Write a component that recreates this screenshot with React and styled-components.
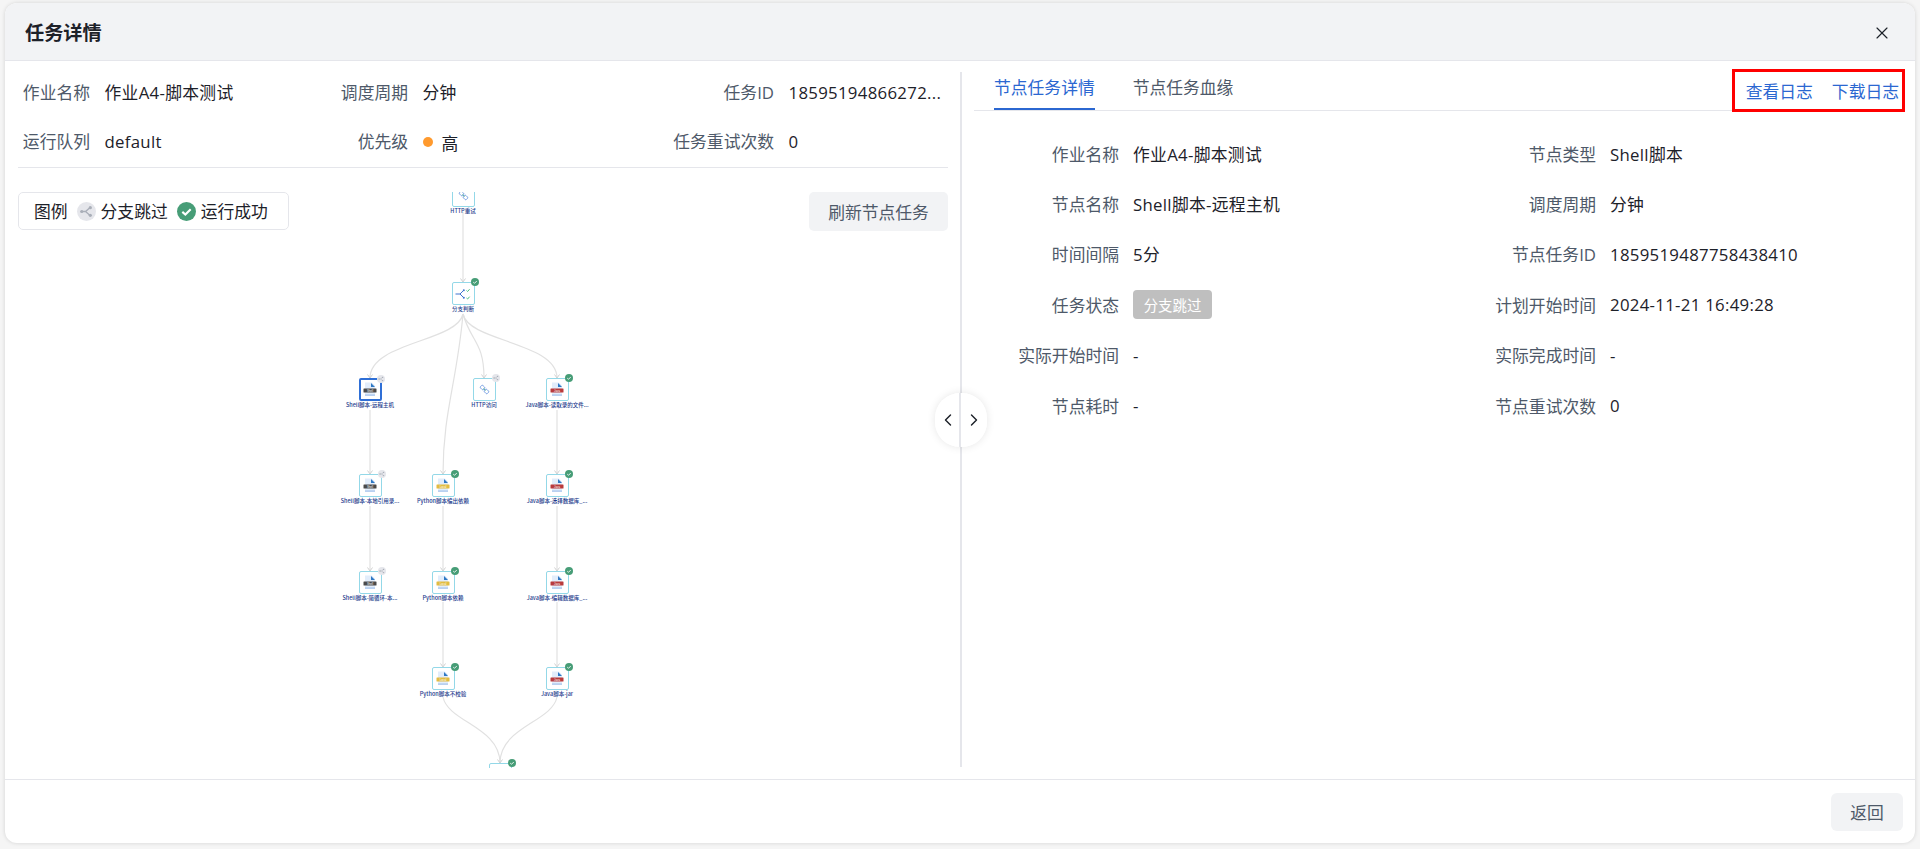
import styled, { createGlobalStyle } from "styled-components";
import { ChevronLeft, ChevronRight, X } from "lucide-react";

const basicInfo = [
  ["作业名称", "作业A4-脚本测试"],
  ["调度周期", "分钟"],
  ["任务ID", "18595194866272..."],
  ["运行队列", "default"],
  ["优先级", "priority"],
  ["任务重试次数", "0"],
];

const nodeInfo = [
  ["作业名称", "作业A4-脚本测试"],
  ["节点类型", "Shell脚本"],
  ["节点名称", "Shell脚本-远程主机"],
  ["调度周期", "分钟"],
  ["时间间隔", "5分"],
  ["节点任务ID", "1859519487758438410"],
  ["任务状态", "tag"],
  ["计划开始时间", "2024-11-21 16:49:28"],
  ["实际开始时间", "-"],
  ["实际完成时间", "-"],
  ["节点耗时", "-"],
  ["节点重试次数", "0"],
];

// x is the node centre, y its top edge, both relative to the canvas
const nodes = [
  { x: 458, y: -8, kind: "http", status: "ok", label: "HTTP重试" },
  { x: 458, y: 90, kind: "branch", status: "ok", label: "分支判断" },
  { x: 365, y: 186, kind: "shell", status: "skip", label: "Shell脚本-远程主机", selected: true },
  { x: 479, y: 186, kind: "http", status: "skip", label: "HTTP访问" },
  { x: 552, y: 186, kind: "java", status: "ok", label: "Java脚本-读取录的文件..." },
  { x: 365, y: 282, kind: "shell", status: "skip", label: "Shell脚本-本地引用录..." },
  { x: 438, y: 282, kind: "python", status: "ok", label: "Python脚本编出依赖" },
  { x: 552, y: 282, kind: "java", status: "ok", label: "Java脚本-选择数据库_..." },
  { x: 365, y: 379, kind: "shell", status: "skip", label: "Shell脚本-简循环-本..." },
  { x: 438, y: 379, kind: "python", status: "ok", label: "Python脚本依赖" },
  { x: 552, y: 379, kind: "java", status: "ok", label: "Java脚本-编辑数据库_..." },
  { x: 438, y: 475, kind: "python", status: "ok", label: "Python脚本不校验" },
  { x: 552, y: 475, kind: "java", status: "ok", label: "Java脚本-jar" },
  { x: 495, y: 571, kind: "http", status: "ok", label: "" },
];

const edges = [
  "M458 20 L458 90",
  "M458 122 C452 150 365 150 365 186",
  "M458 122 C452 190 438 220 438 282",
  "M458 122 C466 150 479 150 479 186",
  "M458 122 C464 150 552 150 552 186",
  "M365 218 L365 282",
  "M365 314 L365 379",
  "M438 314 L438 379",
  "M438 410 L438 475",
  "M552 218 L552 282",
  "M552 314 L552 379",
  "M552 410 L552 475",
  "M438 505 C443 530 495 535 495 571",
  "M552 505 C547 530 495 535 495 571",
];

const arrows = [
  [458, 90], [365, 186], [479, 186], [552, 186],
  [365, 282], [438, 282], [552, 282],
  [365, 379], [438, 379], [552, 379],
  [438, 475], [552, 475], [495, 571],
];

const bannerColors = { shell: "#4a4a4a", python: "#e2bc42", java: "#b83b3d" };
const bannerTexts = { shell: "Shell", python: "Local", java: "Java" };

function StatusIcon({ status, size }) {
  if (status === "ok") {
    return (
      <svg width={size} height={size} viewBox="0 0 20 20">
        <circle cx="10" cy="10" r="10" fill="#479d77" />
        <path d="M5.6 10.4 L8.8 13.2 L14.4 7.6" fill="none" stroke="#fff" strokeWidth="2.2" />
      </svg>
    );
  }
  return (
    <svg width={size} height={size} viewBox="0 0 20 20">
      <circle cx="10" cy="10" r="10" fill="#e5e6eb" />
      <path d="M5 10 L9 10 L13.5 6 M9 10 L13.5 14" fill="none" stroke="#a9aeb8" strokeWidth="1.4" />
      <circle cx="5" cy="10" r="1.7" fill="#a9aeb8" />
      <circle cx="14" cy="6" r="1.7" fill="#a9aeb8" />
      <circle cx="14" cy="14" r="1.7" fill="#a9aeb8" />
    </svg>
  );
}

function NodeIcon({ kind }) {
  if (kind === "http") {
    return (
      <svg width="11" height="11" viewBox="0 0 14 14">
        <g fill="none" strokeWidth="1.1" transform="rotate(-45 7 7)">
          <rect x="4.8" y="0.8" width="4.4" height="5.4" rx="1.4" stroke="#6b97e0" />
          <rect x="4.8" y="7.8" width="4.4" height="5.4" rx="1.4" stroke="#6b97e0" />
          <path d="M7 5 L7 9" stroke="#5cc08a" />
        </g>
      </svg>
    );
  }
  if (kind === "branch") {
    return (
      <svg width="16" height="14" viewBox="0 0 16 14">
        <path d="M0.5 7 L5 7 L8.5 3.5 M5 7 L8.5 10.5" fill="none" stroke="#3f74d0" strokeWidth="1" />
        <circle cx="8.8" cy="3.3" r="1" fill="#3f74d0" />
        <circle cx="8.8" cy="10.7" r="1" fill="#3f74d0" />
        <path d="M11.5 3.5 L12.6 4.5 L14.6 2.2 M11.5 11 L12.6 12 L14.6 9.7" fill="none" stroke="#4cc27f" strokeWidth="1" />
      </svg>
    );
  }
  return (
    <svg width="16" height="16" viewBox="0 0 16 16">
      <path d="M3 0.5 H10 L13 3.5 V14 H3 Z" fill="#e2edfb" />
      <path d="M9 1 L13 5 H9 Z" fill="#2f78c4" />
      <rect x="1.5" y="6.5" width="13" height="4" rx="0.5" fill={bannerColors[kind]} />
      <text x="8" y="9.6" textAnchor="middle" fontSize="2.8" fill="#fff" fontFamily="Liberation Sans, sans-serif">
        {bannerTexts[kind]}
      </text>
      <rect x="3" y="12.6" width="10" height="0.9" fill="#8fb4e6" />
    </svg>
  );
}

export default function App() {
  return (
    <Page>
      <GlobalStyle />
      <Modal>
        <Header>
          <Title>任务详情</Title>
          <CloseIcon size={20} strokeWidth={1.4} />
        </Header>
        <Body>
          <LeftPanel>
            <InfoGrid>
              {basicInfo.map(([label, value]) => (
                <InfoCell key={label}>
                  <InfoLabel>{label}</InfoLabel>
                  {value === "priority" ? (
                    <InfoValue>
                      <PriorityDot />
                      <PriorityText>高</PriorityText>
                    </InfoValue>
                  ) : (
                    <InfoValue>{value}</InfoValue>
                  )}
                </InfoCell>
              ))}
            </InfoGrid>
            <Canvas>
              <EdgeLayer width="954" height="576" viewBox="0 0 954 576">
                {edges.map((d) => (
                  <path key={d} d={d} fill="none" stroke="#e1e1e1" strokeWidth="1.2" />
                ))}
                {arrows.map(([x, y]) => (
                  <path
                    key={`${x}-${y}`}
                    d={`M${x - 2.5} ${y - 3.5} L${x} ${y} L${x + 2.5} ${y - 3.5}`}
                    fill="none"
                    stroke="#d2d2d2"
                    strokeWidth="1"
                  />
                ))}
              </EdgeLayer>
              {nodes.map((node) => (
                <GraphNode key={`${node.x}-${node.y}`} $x={node.x} $y={node.y}>
                  <NodeBox $selected={node.selected}>
                    <NodeIcon kind={node.kind} />
                    <NodeBadge>
                      <StatusIcon status={node.status} size={8} />
                    </NodeBadge>
                  </NodeBox>
                  <NodeLabel>{node.label}</NodeLabel>
                </GraphNode>
              ))}
              <Legend>
                <LegendText>图例</LegendText>
                <LegendItem>
                  <StatusIcon status="skip" size={19} />
                  分支跳过
                </LegendItem>
                <LegendItem>
                  <StatusIcon status="ok" size={19} />
                  运行成功
                </LegendItem>
              </Legend>
              <RefreshButton>刷新节点任务</RefreshButton>
            </Canvas>
          </LeftPanel>
          <Splitter>
            <SplitHandle>
              <ChevronLeft size={20} strokeWidth={1.7} />
              <ChevronRight size={20} strokeWidth={1.7} />
            </SplitHandle>
          </Splitter>
          <RightPanel>
            <TabBar>
              <Tab $active>节点任务详情</Tab>
              <Tab>节点任务血缘</Tab>
              <LogActions>
                <LogLink>查看日志</LogLink>
                <LogLink>下载日志</LogLink>
              </LogActions>
            </TabBar>
            <DetailGrid>
              {nodeInfo.map(([label, value]) => (
                <DetailCell key={label}>
                  <DetailLabel>{label}</DetailLabel>
                  <DetailValue>{value === "tag" ? <StatusTag>分支跳过</StatusTag> : value}</DetailValue>
                </DetailCell>
              ))}
            </DetailGrid>
          </RightPanel>
        </Body>
        <Footer>
          <BackButton>返回</BackButton>
        </Footer>
      </Modal>
    </Page>
  );
}

const GlobalStyle = createGlobalStyle`
  html, body {
    margin: 0;
    padding: 0;
    height: 100%;
    overflow: hidden;
  }
  body {
    background: #f5f5f5;
    font-family: "Open Sans", "Noto Sans CJK SC", sans-serif;
    font-size: 16.8px;
    color: #1d2129;
  }
`;

const Page = styled.div`
  height: 849px;
  padding: 3px 5px 6px 5px;
  box-sizing: border-box;
`;

const Modal = styled.div`
  height: 840px;
  display: flex;
  flex-direction: column;
  background: #fff;
  border-radius: 12px;
  overflow: hidden;
  box-shadow: 0 0 4px rgba(0, 0, 0, 0.14);
`;

const Header = styled.div`
  height: 58px;
  flex: none;
  display: flex;
  align-items: center;
  justify-content: space-between;
  padding: 0 23px 0 20px;
  background: #f2f3f5;
  border-bottom: 1.2px solid #e5e6eb;
  box-sizing: border-box;
`;

const Title = styled.div`
  font-size: 19.2px;
  font-weight: 700;
  color: #1d2129;
`;

const CloseIcon = styled(X)`
  color: #1d2129;
  margin-top: 2px;
`;

const Body = styled.div`
  flex: 1;
  min-height: 0;
  display: flex;
`;

const LeftPanel = styled.div`
  width: 955px;
  flex: none;
  display: flex;
  flex-direction: column;
`;

const InfoGrid = styled.div`
  display: grid;
  grid-template-columns: 318px 337px 1fr;
  grid-auto-rows: 49px;
  margin: 7.5px 12px 0 13px;
  padding-bottom: 0.5px;
  border-bottom: 1.2px solid #e5e6eb;
`;

const InfoCell = styled.div`
  display: flex;
  align-items: center;
  line-height: 24px;

  &:nth-child(3n + 1) > :first-child,
  &:nth-child(3n + 2) > :first-child {
    width: 72px;
  }
  &:nth-child(3n) > :first-child {
    width: 101px;
  }
`;

const InfoLabel = styled.span`
  flex: none;
  text-align: right;
  color: #4e5969;
  white-space: nowrap;
`;

const InfoValue = styled.span`
  margin-left: 14.5px;
  white-space: nowrap;
  display: inline-flex;
  align-items: center;
  letter-spacing: 0.3px;
`;

const PriorityDot = styled.i`
  width: 10px;
  height: 10px;
  border-radius: 50%;
  background: #ff9a2e;
  margin-right: 9px;
`;

const PriorityText = styled.span`
  position: relative;
  top: 2px;
`;

const Canvas = styled.div`
  position: relative;
  height: 576px;
  margin-top: 24px;
  overflow: hidden;
`;

const EdgeLayer = styled.svg`
  position: absolute;
  left: 0;
  top: 0;
`;

const GraphNode = styled.div`
  position: absolute;
  left: ${(p) => p.$x}px;
  top: ${(p) => p.$y}px;
  width: 0;
  display: flex;
  flex-direction: column;
  align-items: center;
`;

const NodeBox = styled.div`
  position: relative;
  flex: none;
  width: 23px;
  height: 23px;
  box-sizing: border-box;
  display: flex;
  align-items: center;
  justify-content: center;
  background: #fff;
  border: ${(p) => (p.$selected ? "2px solid #2f6fd6" : "1px solid #93d8e8")};
  border-radius: 2px;
`;

const NodeBadge = styled.span`
  position: absolute;
  right: -5px;
  top: -5px;
  width: 8px;
  height: 8px;
  display: flex;
`;

const NodeLabel = styled.div`
  margin-top: 1px;
  font-family: "Noto Sans CJK SC", sans-serif;
  font-size: 5.5px;
  font-weight: 500;
  line-height: 7px;
  color: #1c3a8c;
  white-space: nowrap;
`;

const Legend = styled.div`
  position: absolute;
  left: 13px;
  top: 0;
  width: 271px;
  height: 38px;
  box-sizing: border-box;
  display: flex;
  align-items: center;
  gap: 9px;
  padding-left: 15px;
  background: #fff;
  border: 1.2px solid #e5e6eb;
  border-radius: 5px;
`;

const LegendText = styled.span``;

const LegendItem = styled.span`
  display: inline-flex;
  align-items: center;
  gap: 5px;
`;

const RefreshButton = styled.button`
  position: absolute;
  right: 12px;
  top: 0;
  width: 139px;
  height: 39px;
  border: 0;
  border-radius: 5px;
  background: #f2f3f5;
  color: #4e5969;
  font: inherit;
`;

const Splitter = styled.div`
  position: relative;
  width: 2px;
  flex: none;
  margin: 11px 0 12px;
  background: #e5e6eb;
`;

const SplitHandle = styled.div`
  position: absolute;
  left: -25px;
  top: 50%;
  width: 52px;
  height: 54px;
  margin-top: -27px;
  display: flex;
  align-items: center;
  justify-content: space-between;
  padding: 0 3px;
  box-sizing: border-box;
  background: linear-gradient(to right, #fff 24px, #e5e6eb 24px, #e5e6eb 26px, #fff 26px);
  border-radius: 25px;
  box-shadow: 0 0 8px rgba(0, 0, 0, 0.1);
  color: #1d2129;
`;

const RightPanel = styled.div`
  flex: 1;
  min-width: 0;
  padding: 8px 10px 0 12px;
`;

const TabBar = styled.div`
  height: 41px;
  display: flex;
  gap: 38px;
  padding-left: 20px;
  border-bottom: 1.2px solid #e5e6eb;
`;

const Tab = styled.div`
  height: 41px;
  box-sizing: border-box;
  padding-top: 7px;
  line-height: 24px;
  color: ${(p) => (p.$active ? "#2b67d1" : "#4e5969")};
  border-bottom: 2px solid ${(p) => (p.$active ? "#2b67d1" : "transparent")};
`;

const LogActions = styled.div`
  margin-left: auto;
  height: 43px;
  flex: none;
  box-sizing: border-box;
  display: flex;
  align-items: center;
  gap: 19px;
  padding: 0 3px 0 11px;
  border: 3px solid #ff0000;
`;

const LogLink = styled.a`
  color: #2b67d1;
`;

const DetailGrid = styled.div`
  display: grid;
  grid-template-columns: 477px 1fr;
  grid-auto-rows: 50.4px;
  margin: 17.5px 0 0 25px;
`;

const DetailCell = styled.div`
  display: flex;
  align-items: center;
`;

const DetailLabel = styled.span`
  width: 120px;
  flex: none;
  text-align: right;
  color: #4e5969;
`;

const DetailValue = styled.span`
  margin-left: 14px;
  letter-spacing: 0.3px;
`;

const StatusTag = styled.span`
  display: inline-flex;
  align-items: center;
  justify-content: center;
  width: 79px;
  height: 29px;
  border-radius: 4px;
  background: #bfbfbf;
  color: #fff;
  font-size: 14.4px;
  letter-spacing: 0;
`;

const Footer = styled.div`
  height: 64px;
  flex: none;
  display: flex;
  align-items: center;
  justify-content: flex-end;
  padding-right: 12px;
  border-top: 1.2px solid #e5e6eb;
  box-sizing: border-box;
`;

const BackButton = styled.button`
  width: 72px;
  height: 38px;
  border: 0;
  border-radius: 6px;
  background: #f2f3f5;
  color: #4e5969;
  font: inherit;
`;
